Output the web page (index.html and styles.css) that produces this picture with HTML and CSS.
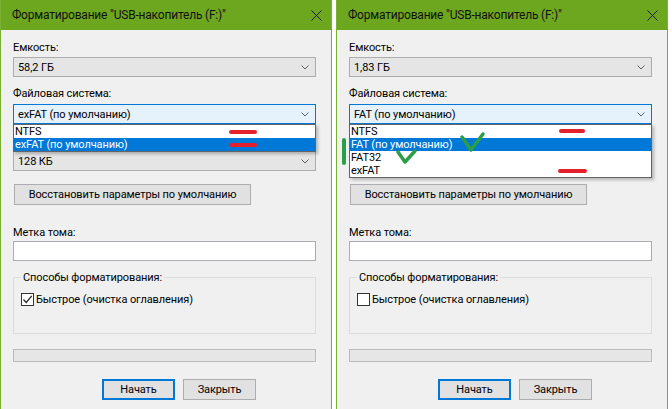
FILE: index.html
```html
<!DOCTYPE html>
<html lang="ru">
<head>
  <meta charset="utf-8">
  <title>Форматирование</title>
  <link rel="stylesheet" href="styles.css">
</head>
<body>
  <div class="screens">

    <!-- Left dialog: 58,2 GB drive -->
    <section class="dialog">
      <div class="titlebar">
        <span class="title">Форматирование "USB-накопитель (F:)"</span>
        <svg class="close" width="11" height="11" viewBox="0 0 11 11"><path d="M0.5 0.5 L10.5 10.5 M10.5 0.5 L0.5 10.5" stroke="#1b1b1b" stroke-width="1"/></svg>
      </div>
      <div class="content">
        <div class="label">Емкость:</div>
        <div class="combo"><span>58,2 ГБ</span><svg class="chev" width="8" height="5" viewBox="0 0 8 5"><path d="M0.5 0.5 L4 4 L7.5 0.5" fill="none" stroke="#606060"/></svg></div>

        <div class="label gap">Файловая система:</div>
        <div class="combo-wrap">
          <div class="combo active"><span>exFAT (по умолчанию)</span><svg class="chev" width="8" height="5" viewBox="0 0 8 5"><path d="M0.5 0.5 L4 4 L7.5 0.5" fill="none" stroke="#606060"/></svg></div>
          <ul class="dropdown">
            <li>NTFS</li>
            <li class="selected">exFAT (по умолчанию)</li>
          </ul>
        </div>

        <div class="label gap-small covered">Размер единицы распределения:</div>
        <div class="combo"><span>128 КБ</span><svg class="chev" width="8" height="5" viewBox="0 0 8 5"><path d="M0.5 0.5 L4 4 L7.5 0.5" fill="none" stroke="#606060"/></svg></div>

        <button class="btn restore">Восстановить параметры по умолчанию</button>

        <div class="label volume">Метка тома:</div>
        <div class="textbox"></div>

        <fieldset class="group">
          <legend>Способы форматирования:</legend>
          <label class="check">
            <span class="box"><svg width="11" height="11" viewBox="0 0 11 11"><path d="M1.5 5.5 L4.2 8.5 L9.8 1.8" fill="none" stroke="#222" stroke-width="1.2"/></svg></span>
            Быстрое (очистка оглавления)
          </label>
        </fieldset>

        <div class="progress"></div>

        <div class="actions">
          <button class="btn primary">Начать</button>
          <button class="btn">Закрыть</button>
        </div>
      </div>
      <svg class="marks" viewBox="0 0 332 409">
        <path d="M230 132 H254 M230 145 H254" stroke="#e3202b" stroke-width="4" stroke-linecap="round"/>
      </svg>
    </section>

    <!-- Right dialog: 1,83 GB drive -->
    <section class="dialog">
      <div class="titlebar">
        <span class="title">Форматирование "USB-накопитель (F:)"</span>
        <svg class="close" width="11" height="11" viewBox="0 0 11 11"><path d="M0.5 0.5 L10.5 10.5 M10.5 0.5 L0.5 10.5" stroke="#1b1b1b" stroke-width="1"/></svg>
      </div>
      <div class="content">
        <div class="label">Емкость:</div>
        <div class="combo"><span>1,83 ГБ</span><svg class="chev" width="8" height="5" viewBox="0 0 8 5"><path d="M0.5 0.5 L4 4 L7.5 0.5" fill="none" stroke="#606060"/></svg></div>

        <div class="label gap">Файловая система:</div>
        <div class="combo-wrap">
          <div class="combo active"><span>FAT (по умолчанию)</span><svg class="chev" width="8" height="5" viewBox="0 0 8 5"><path d="M0.5 0.5 L4 4 L7.5 0.5" fill="none" stroke="#606060"/></svg></div>
          <ul class="dropdown">
            <li>NTFS</li>
            <li class="selected">FAT (по умолчанию)</li>
            <li>FAT32</li>
            <li>exFAT</li>
          </ul>
        </div>

        <div class="label gap-small covered">Размер единицы распределения:</div>
        <div class="combo covered"><span>64 КБ</span></div>

        <button class="btn restore">Восстановить параметры по умолчанию</button>

        <div class="label volume">Метка тома:</div>
        <div class="textbox"></div>

        <fieldset class="group">
          <legend>Способы форматирования:</legend>
          <label class="check">
            <span class="box"></span>
            Быстрое (очистка оглавления)
          </label>
        </fieldset>

        <div class="progress"></div>

        <div class="actions">
          <button class="btn primary">Начать</button>
          <button class="btn">Закрыть</button>
        </div>
      </div>
      <svg class="marks" viewBox="0 0 332 409">
        <path d="M224 131 H246 M223 171 H248" stroke="#e3202b" stroke-width="4" stroke-linecap="round"/>
        <path d="M125 137 L134 150 L146 134 M61 152 L68 162 L78 151" fill="none" stroke="#2b9f45" stroke-width="3.5" stroke-linecap="round" stroke-linejoin="round"/>
        <path d="M7 140 V163" stroke="#2b9f45" stroke-width="4" stroke-linecap="round"/>
      </svg>
    </section>

  </div>
</body>
</html>
```

FILE: styles.css
```css
/* Windows 10 format dialogs */
body {
  margin: 0;
  background: #fff;
  font-family: Roboto, "Noto Sans", Arial, sans-serif;
  font-size: 11px;
  letter-spacing: -0.1px;
  color: #000;
}

.screens {
  display: flex;
  gap: 4px;
}

.dialog {
  position: relative;
  width: 330px;
  height: 409px;
  overflow: hidden;
  background: #f0f0f0;
  border-left: 1px solid #78b032;
  border-right: 1px solid #78b032;
}

.titlebar {
  display: flex;
  align-items: center;
  justify-content: space-between;
  height: 30px;
  padding: 0 9px 0 11px;
  background: #6da61f;
}

.title {
  color: #111;
  font-size: 12px;
  letter-spacing: -0.2px;
  line-height: 15px;
}

.close {
  display: block;
}

.content {
  padding: 10px 15px 0 12px;
}

.label {
  line-height: 15px;
  margin-bottom: 2px;
}

.label.gap {
  margin-top: 9px;
  margin-bottom: 3px;
}

.label.gap-small {
  margin-top: 7px;
  margin-bottom: 5px;
}

.label.volume {
  margin-top: 20px;
  margin-bottom: 1px;
}

.covered {
  visibility: hidden;
}

.combo {
  display: flex;
  align-items: center;
  justify-content: space-between;
  height: 20px;
  box-sizing: border-box;
  padding: 0 6px 0 4px;
  background: #e5e5e5;
  border: 1px solid #adadad;
  line-height: 15px;
}

.combo.active {
  background: #e5f1fb;
  border-color: #0078d7;
}

.combo-wrap {
  position: relative;
}

.dropdown {
  position: absolute;
  left: 0;
  right: 0;
  top: 20px;
  z-index: 2;
  margin: 0;
  padding: 0;
  list-style: none;
  background: #fff;
  border: 1px solid #646464;
  box-shadow: 2px 2px 3px rgba(0, 0, 0, 0.25);
}

.dropdown li {
  height: 13px;
  line-height: 13px;
  padding-left: 1px;
}

.dropdown li.selected {
  background: #0078d7;
  color: #fff;
}

.btn {
  height: 21px;
  padding: 0;
  font-family: inherit;
  font-size: 11px;
  letter-spacing: inherit;
  color: #000;
  background: #e1e1e1;
  border: 1px solid #adadad;
}

.btn.restore {
  display: block;
  width: 237px;
  margin-top: 13px;
  margin-left: 1px;
  white-space: nowrap;
}

.textbox {
  height: 20px;
  box-sizing: border-box;
  background: #fff;
  border: 1px solid #abadb3;
}

.group {
  height: 63px;
  box-sizing: border-box;
  margin: 10px 0 0;
  padding: 9px 7px 0;
  border: 1px solid #dcdcdc;
}

.group legend {
  padding: 0 2px;
  margin-left: 0;
  line-height: 13px;
}

.check {
  display: flex;
  align-items: center;
  gap: 2px;
  line-height: 13px;
}

.box {
  display: flex;
  align-items: center;
  justify-content: center;
  width: 13px;
  height: 13px;
  box-sizing: border-box;
  background: #fff;
  border: 1px solid #333;
}

.box svg {
  display: block;
}

.progress {
  height: 13px;
  box-sizing: border-box;
  margin-top: 15px;
  background: #e6e6e6;
  border: 1px solid #bcbcbc;
}

.actions {
  display: flex;
  gap: 8px;
  margin-top: 17px;
  padding-left: 89px;
}

.actions .btn {
  width: 73px;
}

.btn.primary {
  border: 2px solid #0078d7;
}

.marks {
  position: absolute;
  left: 0;
  top: 0;
  width: 332px;
  height: 409px;
  pointer-events: none;
  z-index: 3;
}
```
